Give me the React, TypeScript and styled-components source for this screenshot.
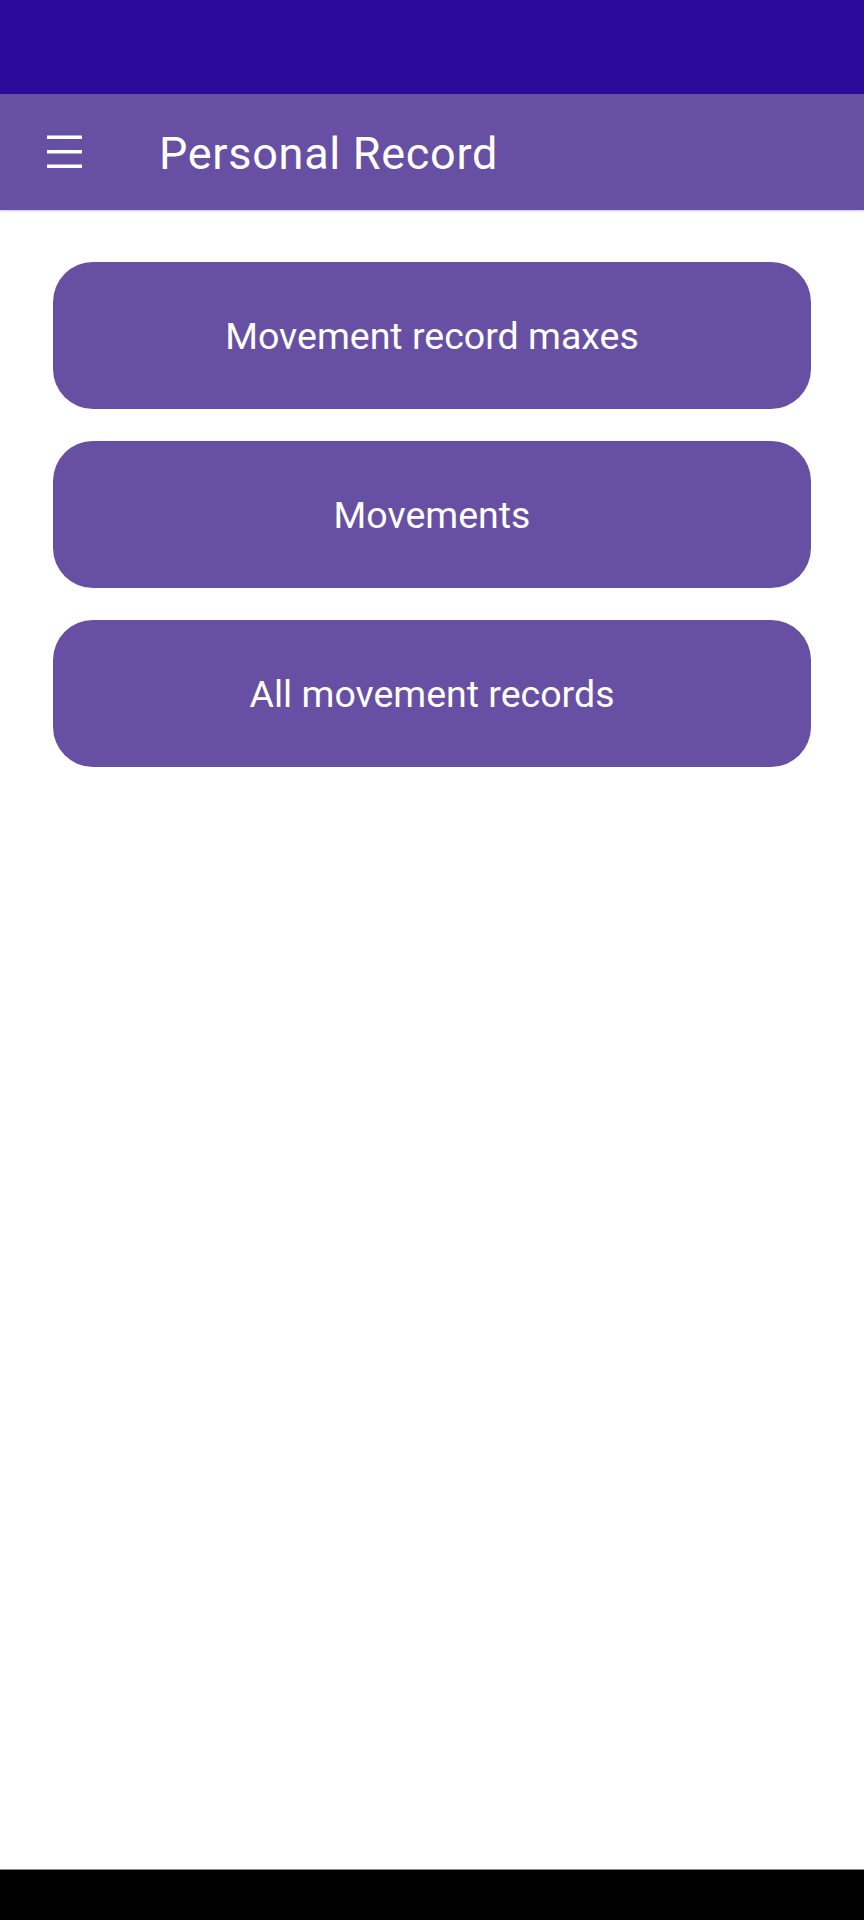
import React from "react";
import styled, { createGlobalStyle } from "styled-components";

const Global = createGlobalStyle`
  html, body { margin: 0; padding: 0; background: #ffffff; }
  body { font-family: Roboto, "Noto Sans", "Liberation Sans", sans-serif; }
  * { box-sizing: border-box; }
`;

const Screen = styled.div`
  width: 864px;
  height: 1920px;
  display: flex;
  flex-direction: column;
  background: #ffffff;
`;

const StatusBar = styled.div`
  height: 94px;
  flex: 0 0 94px;
  background: #2b0a9a;
`;

const Toolbar = styled.header`
  height: 116px;
  flex: 0 0 116px;
  background: #6750a4;
  display: flex;
  align-items: center;
  padding-left: 46px;
  box-shadow: 0 1px 2px rgba(103, 80, 164, 0.35);
  position: relative;
  z-index: 1;
`;

const MenuButton = styled.button`
  width: 36px;
  height: 36px;
  padding: 0;
  border: none;
  background: transparent;
  display: flex;
  align-items: center;
  justify-content: center;
  cursor: pointer;
`;

const Title = styled.h1`
  margin: 3px 0 0 77px;
  font-family: Roboto, sans-serif;
  font-weight: 400;
  font-size: 45px;
  color: #ffffff;
  letter-spacing: 0.7px;
`;

const Content = styled.main`
  flex: 1;
  display: flex;
  flex-direction: column;
  gap: 32px;
  padding: 52px 53px 0;
`;

const NavButton = styled.button`
  height: 147px;
  width: 100%;
  border: none;
  border-radius: 40px;
  background: #6750a4;
  color: #ffffff;
  font-family: Roboto, sans-serif;
  font-size: 37.5px;
  font-weight: 400;
  cursor: pointer;
`;

const NavBar = styled.div`
  height: 51px;
  flex: 0 0 51px;
  background: #000000;
  border-top: 1px solid #8a8a8a;
`;

export default function App() {
  const items = ["Movement record maxes", "Movements", "All movement records"];
  return (
    <>
      <Global />
      <Screen>
        <StatusBar />
        <Toolbar>
          <MenuButton aria-label="menu">
            <svg width="36" height="36" viewBox="0 0 36 36">
              <rect x="1" y="1.5" width="35" height="3.5" fill="#fff" />
              <rect x="1" y="16" width="35" height="3.5" fill="#fff" />
              <rect x="1" y="30.5" width="35" height="3.5" fill="#fff" />
            </svg>
          </MenuButton>
          <Title>Personal Record</Title>
        </Toolbar>
        <Content>
          {items.map((t) => (
            <NavButton key={t}>{t}</NavButton>
          ))}
        </Content>
        <NavBar />
      </Screen>
    </>
  );
}
